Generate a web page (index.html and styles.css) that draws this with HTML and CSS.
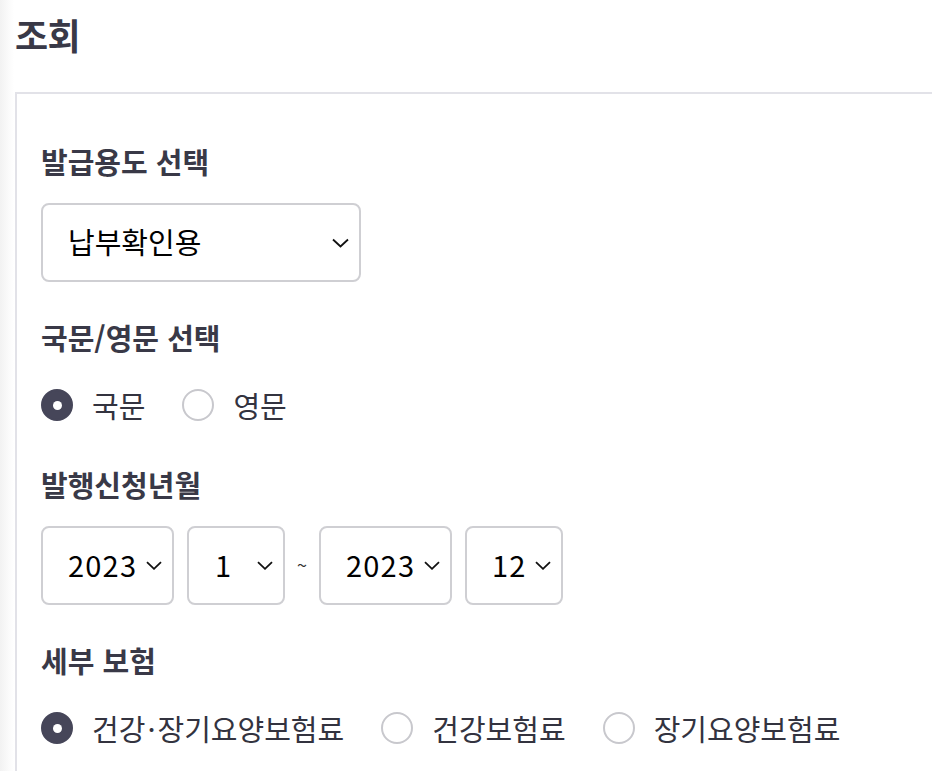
FILE: index.html
```html
<!DOCTYPE html>
<html lang="ko">
<head>
<meta charset="utf-8">
<title>조회</title>
<link rel="stylesheet" href="styles.css">
</head>
<body>
<div class="page">
  <h1 class="title">조회</h1>
  <div class="panel">
    <div class="field">
      <div class="label">발급용도 선택</div>
      <div class="select select-main">
        <span class="select-text">납부확인용</span>
        <svg class="chev" width="17" height="10" viewBox="0 0 17 10"><path d="M1 1.5 L8.5 8.5 L16 1.5" fill="none" stroke="#111" stroke-width="1.8"/></svg>
      </div>
    </div>
    <div class="field field-radio">
      <div class="label">국문/영문 선택</div>
      <div class="radios">
        <label class="radio"><span class="dot on"></span><span class="rtext">국문</span></label>
        <label class="radio"><span class="dot"></span><span class="rtext">영문</span></label>
      </div>
    </div>
    <div class="field">
      <div class="label">발행신청년월</div>
      <div class="dates">
        <div class="select sel-year"><span class="select-text num">2023</span><svg class="chev" width="16" height="9" viewBox="0 0 16 9"><path d="M1 1.2 L8 7.8 L15 1.2" fill="none" stroke="#111" stroke-width="1.8"/></svg></div>
        <div class="select sel-month"><span class="select-text num">1</span><svg class="chev" width="16" height="9" viewBox="0 0 16 9"><path d="M1 1.2 L8 7.8 L15 1.2" fill="none" stroke="#111" stroke-width="1.8"/></svg></div>
        <span class="tilde">~</span>
        <div class="select sel-year"><span class="select-text num">2023</span><svg class="chev" width="16" height="9" viewBox="0 0 16 9"><path d="M1 1.2 L8 7.8 L15 1.2" fill="none" stroke="#111" stroke-width="1.8"/></svg></div>
        <div class="select sel-month sel-month-2"><span class="select-text num">12</span><svg class="chev" width="16" height="9" viewBox="0 0 16 9"><path d="M1 1.2 L8 7.8 L15 1.2" fill="none" stroke="#111" stroke-width="1.8"/></svg></div>
      </div>
    </div>
    <div class="field field-radio">
      <div class="label">세부 보험</div>
      <div class="radios">
        <label class="radio"><span class="dot on"></span><span class="rtext">건강<span class="mid">·</span>장기요양보험료</span></label>
        <label class="radio"><span class="dot"></span><span class="rtext">건강보험료</span></label>
        <label class="radio"><span class="dot"></span><span class="rtext">장기요양보험료</span></label>
      </div>
    </div>
  </div>
</div>
</body>
</html>
```
FILE: styles.css
```css
html, body {
  margin: 0;
  padding: 0;
}
body {
  font-family: "Noto Sans CJK KR", "Noto Sans", sans-serif;
  background: linear-gradient(to right, #f2f2f2 0, #fbfbfb 9px, #fff 14px);
  color: #3a3a48;
}
.page {
  box-sizing: border-box;
  height: 771px;
  padding-left: 15px;
  padding-top: 8px;
  display: flex;
  flex-direction: column;
  overflow: hidden;
}
.title {
  margin: 0;
  font-size: 36px;
  font-weight: 700;
  line-height: 52px;
  color: #393947;
  letter-spacing: -0.5px;
}
.panel {
  flex: 1;
  margin-top: 32px;
  border-top: 2px solid #e2e2e8;
  border-left: 2px solid #e2e2e8;
  background: #fff;
  padding: 47px 0 0 24px;
  display: flex;
  flex-direction: column;
  gap: 35px;
}
.field {
  display: flex;
  flex-direction: column;
  gap: 22px;
}
.field-radio {
  gap: 31px;
  margin-bottom: 7px;
}
.label {
  font-size: 29px;
  font-weight: 700;
  line-height: 40px;
  color: #393947;
}
.select {
  box-sizing: border-box;
  height: 79px;
  border: 2px solid #cfcfd3;
  border-radius: 8px;
  background: #fff;
  display: flex;
  align-items: center;
  justify-content: space-between;
  padding: 0 10px 3px 25px;
  color: #000;
  font-size: 29px;
}
.select .chev {
  margin-top: 3px;
}
.select-main {
  width: 320px;
}
.select-text {
  line-height: 1;
}
.select-text.num {
  letter-spacing: 1.2px;
}
.chev {
  display: block;
  flex: none;
}
.dates {
  display: flex;
  align-items: center;
}
.sel-year {
  width: 133px;
  padding-right: 10px;
}
.sel-month {
  width: 98px;
  padding-left: 26px;
  padding-right: 10px;
  margin-left: 13px;
}
.sel-month-2 {
  padding-left: 25px;
}
.tilde {
  width: 34px;
  text-align: center;
  font-size: 18px;
  line-height: 1;
  color: #333;
  padding-bottom: 4px;
}
.radios {
  display: flex;
  align-items: center;
  gap: 37px;
  height: 34px;
}
.radio {
  display: flex;
  align-items: center;
  gap: 19px;
}
.dot {
  box-sizing: border-box;
  width: 32px;
  height: 32px;
  border-radius: 50%;
  border: 2px solid #c8c8cd;
  background: #fff;
  position: relative;
  flex: none;
}
.dot.on {
  border-color: #464659;
  background: #464659;
}
.dot.on::after {
  content: "";
  position: absolute;
  left: 50%;
  top: 50%;
  width: 9px;
  height: 9px;
  margin: -4.5px 0 0 -4.5px;
  border-radius: 50%;
  background: #fff;
}
.rtext {
  font-size: 29px;
  line-height: 34px;
  color: #33333f;
}
.mid {
  padding: 0 2px;
}
```
